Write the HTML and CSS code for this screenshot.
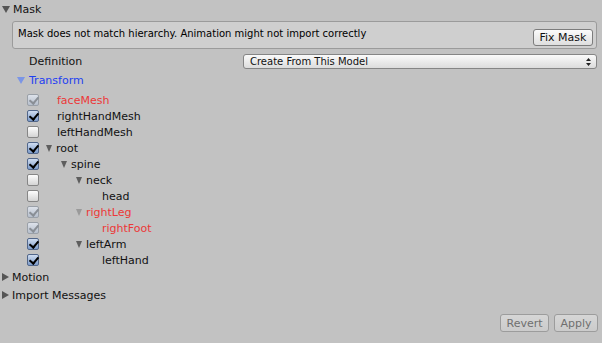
FILE: index.html
```html
<!DOCTYPE html>
<html>
	<head>
		<meta charset="utf-8">
		<title>Mask</title>
		<link rel="stylesheet" href="styles.css">
	</head>
	<body>
	<div class="inspector">
		<div class="foldout">
			<span class="arrow down"></span>
			<span>Mask</span>
		</div>

		<div class="helpbox">
			<span class="helptext">Mask does not match hierarchy. Animation might not import correctly</span>
			<a href="#" class="button fix">Fix Mask</a>
		</div>

		<div class="field">
			<span class="label">Definition</span>
			<div class="popup">
				<span>Create From This Model</span>
				<svg class="updown" width="5" height="8" viewBox="0 0 5 8">
					<path d="M2.5 0 L5 3 L0 3 Z M2.5 8 L5 5 L0 5 Z" fill="#222"/>
				</svg>
			</div>
		</div>

		<div class="subfold">
			<span class="arrow down blue"></span>
			<span class="bluetext">Transform</span>
		</div>

		<ul class="tree">
			<li class="row">
				<span class="check mixed"></span>
				<span class="node d0"><span class="spacer"></span><span class="missing">faceMesh</span></span>
			</li>
			<li class="row">
				<span class="check on"></span>
				<span class="node d0"><span class="spacer"></span><span>rightHandMesh</span></span>
			</li>
			<li class="row">
				<span class="check"></span>
				<span class="node d0"><span class="spacer"></span><span>leftHandMesh</span></span>
			</li>
			<li class="row">
				<span class="check on"></span>
				<span class="node d0"><span class="arrow down small"></span><span>root</span></span>
			</li>
			<li class="row">
				<span class="check on"></span>
				<span class="node d1"><span class="arrow down small"></span><span>spine</span></span>
			</li>
			<li class="row">
				<span class="check"></span>
				<span class="node d2"><span class="arrow down small"></span><span>neck</span></span>
			</li>
			<li class="row">
				<span class="check"></span>
				<span class="node d3"><span class="spacer"></span><span>head</span></span>
			</li>
			<li class="row">
				<span class="check mixed"></span>
				<span class="node d2"><span class="arrow down small faded"></span><span class="missing">rightLeg</span></span>
			</li>
			<li class="row">
				<span class="check mixed"></span>
				<span class="node d3"><span class="spacer"></span><span class="missing">rightFoot</span></span>
			</li>
			<li class="row">
				<span class="check on"></span>
				<span class="node d2"><span class="arrow down small"></span><span>leftArm</span></span>
			</li>
			<li class="row">
				<span class="check on"></span>
				<span class="node d3"><span class="spacer"></span><span>leftHand</span></span>
			</li>
		</ul>

		<div class="foldout">
			<span class="arrow right"></span>
			<span>Motion</span>
		</div>
		<div class="foldout">
			<span class="arrow right"></span>
			<span>Import Messages</span>
		</div>

		<div class="footer">
			<a href="#" class="button off revert">Revert</a>
			<a href="#" class="button off apply">Apply</a>
		</div>
	</div>
	</body>
</html>
```

FILE: styles.css
```css
* {
	margin: 0;
	padding: 0;
	box-sizing: border-box;
}
body {
	background: #c2c2c2;
	font-family: "DejaVu Sans", sans-serif;
	font-size: 11px;
	color: #111;
	overflow: hidden;
}
.inspector {
	width: 602px;
	height: 343px;
	display: flex;
	flex-direction: column;
}
a {
	text-decoration: none;
	color: inherit;
}

/* foldout arrows */
.arrow {
	display: inline-block;
	width: 0;
	height: 0;
}
.arrow.down {
	border-left: 4px solid transparent;
	border-right: 4px solid transparent;
	border-top: 7px solid #555;
}
.arrow.right {
	border-top: 4px solid transparent;
	border-bottom: 4px solid transparent;
	border-left: 7px solid #555;
}
.arrow.small {
	border-left-width: 3.5px;
	border-right-width: 3.5px;
	border-top-width: 7px;
	border-top-color: #5e5e5e;
	margin-right: 4px;
}
.arrow.faded {
	border-top-color: #9a9a9a;
}
.arrow.blue {
	border-top-color: #7b95e6;
}

.foldout {
	height: 18px;
	display: flex;
	align-items: center;
	padding-left: 2px;
	gap: 3px;
}

/* help box */
.helpbox {
	margin: 3px 5px 0 12px;
	height: 28px;
	border: 1px solid #9b9b9b;
	border-radius: 3px;
	background: #cfcfcf;
	display: flex;
	justify-content: space-between;
	padding: 5px 3px 2px 5px;
}
.helptext {
	font-size: 10px;
	line-height: 14px;
	color: #000;
}
.button {
	display: flex;
	align-items: center;
	justify-content: center;
	border: 1px solid #7c7c7c;
	border-radius: 3px;
	background: linear-gradient(#fbfbfb, #dedede);
	font-size: 11px;
}
.fix {
	align-self: flex-end;
	width: 60px;
	height: 17px;
}
.button.off {
	color: #6f6f6f;
	border-color: #9c9c9c;
	background: linear-gradient(#d6d6d6, #cbcbcb);
	height: 18px;
}
.revert {
	width: 49px;
}
.apply {
	width: 44px;
}

/* definition row */
.field {
	margin-top: 5px;
	height: 15px;
	display: flex;
	align-items: center;
	padding: 0 5px 0 29px;
}
.label {
	width: 214px;
}
.popup {
	flex: 1;
	height: 15px;
	border: 1px solid #858585;
	border-radius: 3px;
	background: linear-gradient(#fafafa, #dcdcdc);
	display: flex;
	align-items: center;
	justify-content: space-between;
	padding: 0 5px 0 6px;
	font-size: 10px;
}

/* transform tree */
.subfold {
	margin-top: 3px;
	height: 16px;
	display: flex;
	align-items: center;
	padding-left: 17px;
	gap: 4px;
}
.bluetext {
	color: #1e3ff2;
}
.tree {
	list-style: none;
	margin-top: 4px;
}
.row {
	height: 16px;
	display: flex;
	align-items: center;
	padding-left: 27px;
}
.check {
	width: 12px;
	height: 12px;
	border: 1px solid #868686;
	border-radius: 2px;
	background: linear-gradient(#fdfdfd, #d4d4d4);
	position: relative;
}
.check.on {
	border-color: #51668a;
	background: linear-gradient(#cfdcf0, #7c9bca);
}
.check.mixed {
	border-color: #9aa0a8;
	background: linear-gradient(#dde2ea, #b6bfcc);
}
.check.on::after,
.check.mixed::after {
	content: "";
	position: absolute;
	left: 3px;
	top: 0px;
	width: 4px;
	height: 7px;
	border-right: 2px solid #000;
	border-bottom: 2px solid #000;
	transform: rotate(40deg);
}
.check.mixed::after {
	border-color: #8a8f96;
}
.node {
	display: flex;
	align-items: center;
	margin-left: 7px;
}
.node.d1 { margin-left: 22px; }
.node.d2 { margin-left: 37px; }
.node.d3 { margin-left: 52px; }
.spacer {
	width: 11px;
}
.missing {
	color: #ec3838;
}

.footer {
	margin-top: 10px;
	display: flex;
	justify-content: flex-end;
	gap: 5px;
	padding-right: 4px;
}
```
